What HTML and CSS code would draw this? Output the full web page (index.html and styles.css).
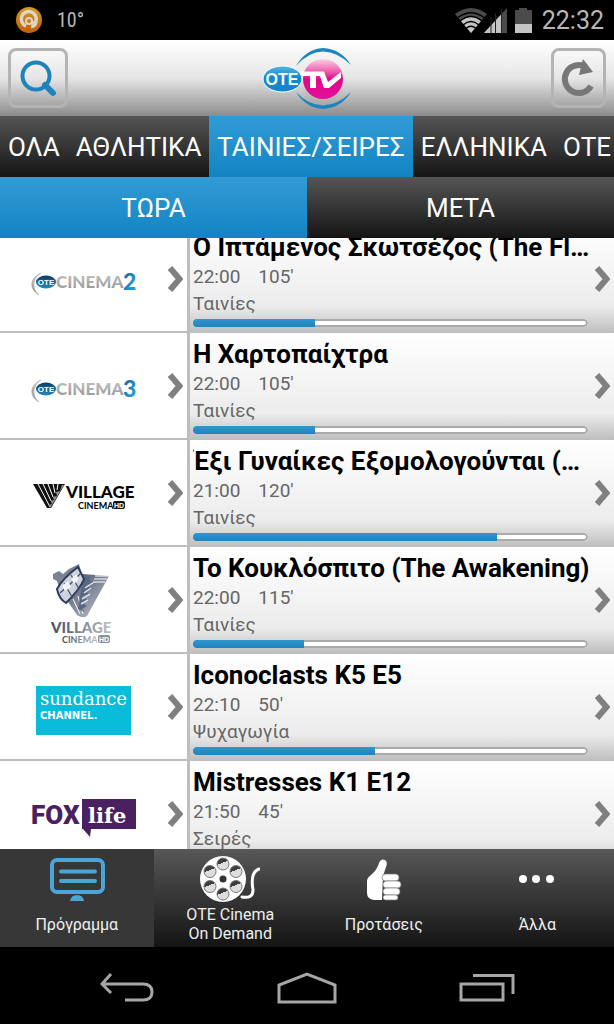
FILE: index.html
```html
<!DOCTYPE html>
<html lang="el">
<head>
<meta charset="utf-8">
<meta name="viewport" content="width=device-width, initial-scale=1">
<title>OTE TV</title>
<link rel="stylesheet" href="styles.css">
</head>
<body>
<div class="screen">
  <div class="status">
    <svg class="status-app" width="26" height="26" viewBox="0 0 26 26" aria-hidden="true">
      <defs><linearGradient id="orange" x2="0" y2="1"><stop offset="0" stop-color="#d59a22"/><stop offset="1" stop-color="#c25f0a"/></linearGradient></defs>
      <circle cx="13" cy="13" r="13" fill="url(#orange)"/>
      <path d="M10 19A7.500 7.500 0 1 1 20 14Q20 18 17 19V14" fill="none" stroke="#ddd6c8" stroke-width="3.500"/>
      <circle cx="13" cy="14" r="3" fill="none" stroke="#ddd6c8" stroke-width="2"/>
    </svg>
    <span class="status-temp">10°</span>
    <svg class="status-signal" width="78" height="26" viewBox="0 0 78 26" aria-hidden="true">
      <path d="M0 7Q16-5 32 7L16 26Z" fill="#4b4b4b"/>
      <path d="M6 14Q16 6 26 14L16 26Z" fill="#c4c4c4"/>
      <path d="M3 10.500Q16 1 29 10.500M5 14Q16 5 27 14M8 18Q16 11 24 18M11 21.500Q16 17 21 21.500" fill="none" stroke="#000" stroke-width="1.300"/>
      <path d="M29 26L52 1V26Z" fill="#4b4b4b"/>
      <path d="M29 26L46 7.500V26Z" fill="#c4c4c4"/>
      <path d="M36 10V26M40.500 6V26M46.500 2V26" stroke="#222" stroke-width="1"/>
      <path d="M60 3H64V1H72V3H77V26H60Z" fill="#4b4b4b"/>
      <path d="M60 17H77V26H60Z" fill="#c4c4c4"/>
    </svg>
    <time class="status-clock">22:32</time>
  </div>

  <header class="header">
    <button class="tool" type="button" aria-label="Αναζήτηση">
      <svg width="40" height="40" viewBox="0 0 40 40" aria-hidden="true" fill="none" stroke="#1f82bd">
        <circle cx="18" cy="18" r="13.500" stroke-width="4"/>
        <path d="M27 27L35 35" stroke-width="6" stroke-linecap="round"/>
      </svg>
    </button>
    <svg class="brand" width="90" height="62" viewBox="0 0 90 62" role="img" aria-label="OTE TV">
      <defs>
        <linearGradient id="pink" x2="0" y2="1"><stop offset="0" stop-color="#fbd0e6"/><stop offset=".35" stop-color="#ec4fa8"/><stop offset=".5" stop-color="#e2078a"/><stop offset="1" stop-color="#e2109a"/></linearGradient>
        <linearGradient id="sky" x2="0" y2="1"><stop offset="0" stop-color="#58b4e0"/><stop offset=".45" stop-color="#1489cc"/><stop offset="1" stop-color="#1085ca"/></linearGradient>
      </defs>
      <path d="M34 19Q44 2 61 1Q79 2 89 18Q76 5 61 4.500Q46 5 34 19ZM34 45Q44 61 61 62Q79 61 89 45Q76 58 61 58.500Q46 58 34 45Z" fill="#1b86be"/>
      <circle cx="61" cy="32" r="20" fill="url(#pink)"/>
      <path d="M38 24.500H62L66 35L79 25V31L67 41H62L58 29H54V41H48V29H38Z" fill="#fff"/>
      <ellipse cx="20.500" cy="32" rx="19.500" ry="13" fill="url(#sky)" stroke="#fff" stroke-width="1"/>
      <text class="brand-ote" x="20" y="38" text-anchor="middle">OTE</text>
    </svg>
    <button class="tool" type="button" aria-label="Ανανέωση">
      <svg width="40" height="40" viewBox="0 0 40 40" aria-hidden="true">
        <path d="M27 9A14 14 0 1 0 32 28" fill="none" stroke="#777" stroke-width="6"/>
        <path d="M24 1L34 14L20 17Z" fill="#777"/>
      </svg>
    </button>
  </header>

  <nav class="genres" aria-label="Κατηγορίες">
    <button type="button" class="genre">ΟΛΑ</button>
    <button type="button" class="genre">ΑΘΛΗΤΙΚΑ</button>
    <button type="button" class="genre active" aria-current="true">ΤΑΙΝΙΕΣ/ΣΕΙΡΕΣ</button>
    <button type="button" class="genre">ΕΛΛΗΝΙΚΑ</button>
    <button type="button" class="genre">ΟΤΕ</button>
  </nav>
  <nav class="times" aria-label="Ώρα">
    <button type="button" class="time active" aria-current="true">ΤΩΡΑ</button>
    <button type="button" class="time">ΜΕΤΑ</button>
  </nav>

  <main class="list-view">
    <svg class="defs" width="0" height="0" aria-hidden="true">
      <symbol id="chevron" viewBox="0 0 16 26"><path d="M3 2L12.500 13L3 24" fill="none" stroke="#808080" stroke-width="6"/></symbol>
      <linearGradient id="navy" x2="0" y2="1"><stop offset="0" stop-color="#0b3c66"/><stop offset="1" stop-color="#2489bd"/></linearGradient>
      <linearGradient id="silver" x2="0" y2="1"><stop offset="0" stop-color="#c9c9c9"/><stop offset="1" stop-color="#929292"/></linearGradient>
      <linearGradient id="digit" x2="1" y2="1"><stop offset="0" stop-color="#15578f"/><stop offset="1" stop-color="#27b4ea"/></linearGradient>
      <linearGradient id="steel" x2="1" y2="1"><stop offset="0" stop-color="#3d4660"/><stop offset="1" stop-color="#c3c8d2"/></linearGradient>
      <linearGradient id="steeltext"><stop offset="0" stop-color="#3e4a5a"/><stop offset="1" stop-color="#c0c5ca"/></linearGradient>
      <symbol id="otecinema" viewBox="0 0 106 26">
        <path d="M10 3C-2 8-2 20 8 25C1 19 1 9 10 3Z" fill="url(#silver)" stroke="#aaa" stroke-width=".5"/>
        <ellipse cx="15" cy="12" rx="10" ry="6.500" fill="url(#navy)"/>
        <text class="mini-ote" x="15" y="15" text-anchor="middle">OTE</text>
        <text class="cinema-word" x="25" y="18" fill="url(#silver)">CINEMA</text>
      </symbol>
    </svg>
    <ul class="rows">
      <li class="row">
        <a class="channel" href="#c2" aria-label="OTE Cinema 2">
          <span class="logo"><svg width="106" height="26" viewBox="0 0 106 26"><use href="#otecinema"/><text class="cinema-num" x="92" y="20" fill="url(#digit)">2</text></svg></span>
          <svg class="chev" width="16" height="26"><use href="#chevron"/></svg>
        </a>
        <a class="show" href="#s1">
          <span class="info"><strong class="title">Ο Ιπτάμενος Σκωτσέζος (The Flying Scotsman)</strong>
          <span class="meta"><span>22:00</span><span>105'</span></span>
          <span class="kind">Ταινίες</span>
          <progress class="bar" value="31" max="100" aria-label="Πρόοδος"></progress></span>
          <svg class="chev" width="16" height="26"><use href="#chevron"/></svg>
        </a>
      </li>
      <li class="row">
        <a class="channel" href="#c3" aria-label="OTE Cinema 3">
          <span class="logo"><svg width="106" height="26" viewBox="0 0 106 26"><use href="#otecinema"/><text class="cinema-num" x="92" y="20" fill="url(#digit)">3</text></svg></span>
          <svg class="chev" width="16" height="26"><use href="#chevron"/></svg>
        </a>
        <a class="show" href="#s2">
          <span class="info"><strong class="title">Η Χαρτοπαίχτρα</strong>
          <span class="meta"><span>22:00</span><span>105'</span></span>
          <span class="kind">Ταινίες</span>
          <progress class="bar" value="31" max="100" aria-label="Πρόοδος"></progress></span>
          <svg class="chev" width="16" height="26"><use href="#chevron"/></svg>
        </a>
      </li>
      <li class="row">
        <a class="channel" href="#c4" aria-label="Village Cinema HD">
          <span class="logo"><svg width="102" height="28" viewBox="0 0 102 28">
            <path d="M0 1H32L18 25H14Z" fill="#111"/>
            <path d="M5 1L17 24M10 1L18 18M15 1L20 14M20 1L22 10M25 1L24 7" stroke="#fff" stroke-width="1"/>
            <path d="M29 2L31 2L17 25L16 22L19 21L18 18L21 17L20 14L24 13L23 9L27 8Z" fill="#999"/>
            <text class="village" x="33" y="15">VILLAGE</text>
            <text class="village-sub" x="45" y="26">CINEMA</text>
            <rect x="80" y="18" width="12" height="8" rx="2" fill="#111"/>
            <text class="hd" x="86" y="25" text-anchor="middle">HD</text>
          </svg></span>
          <svg class="chev" width="16" height="26"><use href="#chevron"/></svg>
        </a>
        <a class="show" href="#s3">
          <span class="info"><strong class="title">Έξι Γυναίκες Εξομολογούνται (Women Confess)</strong>
          <span class="meta"><span>21:00</span><span>120'</span></span>
          <span class="kind">Ταινίες</span>
          <progress class="bar" value="77" max="100" aria-label="Πρόοδος"></progress></span>
          <svg class="chev" width="16" height="26"><use href="#chevron"/></svg>
        </a>
      </li>
      <li class="row">
        <a class="channel" href="#c5" aria-label="Village Cinema HD">
          <span class="logo"><svg width="66" height="80" viewBox="0 0 66 80">
            <path d="M9 26L32 10L58 12L36 52Q32 55 26 51Z" fill="url(#steel)"/>
            <path d="M22 35L29 50M27 32L32 50M44 12L58 12M43 15L56 15M42 18L54 18" stroke="#fff" stroke-width="1"/>
            <path d="M32 14L38 12L39 17L43 18L34 22L41 24L33 27L39 30L31 33L37 36L31 39L36 42L31 45L34 48L27 45Z" fill="#596783"/>
            <path d="M34 24L43 18M33 29L40 24M31 35L39 30M30 40L37 36" stroke="#dde1ea" stroke-width="1.500"/>
            <path d="M2 10L8 7L12 10L18 5L28 0L31 11L19 20L8 23L6 17L2 15Z" fill="#7b8291"/>
            <path d="M6 25Q12 14 27 3L33 15Q29 25 15 39Q8 35 6 25Z" fill="#cdd3df" stroke="#2c3b5b" stroke-width="2"/>
            <path d="M9 29Q20 20 30 9M13 19L21 33M20 11L28 25" fill="none" stroke="#43516e" stroke-width="1.200"/>
            <path d="M11 22L17 17L20 23L14 27ZM20 15L25 10L28 15L23 20Z" fill="#f2f4fa"/>
            <text class="village small" x="0" y="69" fill="url(#steeltext)">VILLAGE</text>
            <text class="village-sub" x="11" y="79" fill="url(#steeltext)">CINEMA</text>
            <rect x="47" y="71" width="12" height="8" rx="2" fill="#8b9094"/>
            <text class="hd" x="53" y="78" text-anchor="middle">HD</text>
          </svg></span>
          <svg class="chev" width="16" height="26"><use href="#chevron"/></svg>
        </a>
        <a class="show" href="#s4">
          <span class="info"><strong class="title">Το Κουκλόσπιτο (The Awakening)</strong>
          <span class="meta"><span>22:00</span><span>115'</span></span>
          <span class="kind">Ταινίες</span>
          <progress class="bar" value="28" max="100" aria-label="Πρόοδος"></progress></span>
          <svg class="chev" width="16" height="26"><use href="#chevron"/></svg>
        </a>
      </li>
      <li class="row">
        <a class="channel" href="#c6">
          <span class="logo"><span class="sundance"><span>sundance</span><small>CHANNEL.</small></span></span>
          <svg class="chev" width="16" height="26"><use href="#chevron"/></svg>
        </a>
        <a class="show" href="#s5">
          <span class="info"><strong class="title">Iconoclasts K5 E5</strong>
          <span class="meta"><span>22:10</span><span>50'</span></span>
          <span class="kind">Ψυχαγωγία</span>
          <progress class="bar" value="46" max="100" aria-label="Πρόοδος"></progress></span>
          <svg class="chev" width="16" height="26"><use href="#chevron"/></svg>
        </a>
      </li>
      <li class="row">
        <a class="channel" href="#c7" aria-label="FOX life">
          <span class="logo"><svg width="106" height="40" viewBox="0 0 106 40">
            <text class="fox" x="0" y="26">FOX</text>
            <path d="M51 1H105V31H60L59 39L52 31H51Z" fill="#4a2060"/>
            <text class="life" x="57" y="25">life</text>
          </svg></span>
          <svg class="chev" width="16" height="26"><use href="#chevron"/></svg>
        </a>
        <a class="show" href="#s6">
          <span class="info"><strong class="title">Mistresses K1 E12</strong>
          <span class="meta"><span>21:50</span><span>45'</span></span>
          <span class="kind">Σειρές</span>
          <progress class="bar" value="80" max="100" aria-label="Πρόοδος"></progress></span>
          <svg class="chev" width="16" height="26"><use href="#chevron"/></svg>
        </a>
      </li>
    </ul>
  </main>

  <nav class="tabbar" aria-label="Κύριο μενού">
    <button type="button" class="tab current" aria-current="page">
      <svg width="56" height="46" viewBox="0 0 56 46" aria-hidden="true" fill="none" stroke="#4aa5d8" stroke-width="4">
        <rect x="3" y="4" width="51" height="32" rx="5"/>
        <path d="M12 15.500H46M12 25H46" stroke-linecap="round"/>
        <path d="M21 45Q22 39 28 39Q34 39 35 45Z" fill="#4aa5d8" stroke="none"/>
      </svg>
      <span class="tab-label">Πρόγραμμα</span>
    </button>
    <button type="button" class="tab">
      <svg width="60" height="46" viewBox="0 0 60 46" aria-hidden="true">
        <defs><linearGradient id="hole" x1="0" y1="0" x2=".4" y2="1"><stop offset=".5" stop-color="#3e3e3e"/><stop offset=".5" stop-color="#ddd"/></linearGradient></defs>
        <circle cx="23" cy="23" r="23" fill="#fff"/>
        <g fill="url(#hole)" stroke="#777" stroke-width="1">
          <circle cx="23" cy="8" r="6"/><circle cx="36" cy="15.500" r="6"/><circle cx="36" cy="30.500" r="6"/>
          <circle cx="23" cy="38" r="6"/><circle cx="10" cy="30.500" r="6"/><circle cx="10" cy="15.500" r="6"/>
        </g>
        <circle cx="23" cy="23" r="3.500" fill="#333"/>
        <path d="M42 41Q53 43 53 34Q50 16 59 13" fill="none" stroke="#fff" stroke-width="3" stroke-linecap="round"/>
      </svg>
      <span class="tab-label">OTE Cinema<br>On Demand</span>
    </button>
    <button type="button" class="tab">
      <svg width="36" height="46" viewBox="0 0 36 46" aria-hidden="true" fill="#fff">
        <path d="M1 25Q1 22 5 19Q11 14 13 7Q15 2 19 4Q22 6 20 11L17 20L16 44H8Q1 43 1 37Z"/>
        <g stroke="#777" stroke-width=".7"><rect x="16" y="18" width="17" height="7" rx="3.500"/><rect x="17" y="25" width="18" height="7" rx="3.500"/><rect x="17" y="32" width="17" height="7" rx="3.500"/><rect x="17" y="39" width="15" height="5" rx="2.500"/></g>
      </svg>
      <span class="tab-label">Προτάσεις</span>
    </button>
    <button type="button" class="tab">
      <svg width="36" height="46" viewBox="0 0 36 46" aria-hidden="true" fill="#fff"><circle cx="4" cy="23" r="4"/><circle cx="17" cy="23" r="4"/><circle cx="31" cy="23" r="4"/></svg>
      <span class="tab-label">Άλλα</span>
    </button>
  </nav>

  <div class="system">
    <button type="button" class="key" aria-label="Πίσω"><svg width="54" height="30" viewBox="0 0 54 30"><path d="M11 1L2 11L11 20M2 11H43Q52 11 52 19Q52 27 43 27H25" fill="none" stroke="#a6a6a6" stroke-width="3"/></svg></button>
    <button type="button" class="key" aria-label="Αρχική"><svg width="60" height="32" viewBox="0 0 60 32"><path d="M2 30V13L30 2L58 13V30Z" fill="none" stroke="#a6a6a6" stroke-width="3"/></svg></button>
    <button type="button" class="key" aria-label="Πρόσφατα"><svg width="56" height="30" viewBox="0 0 56 30"><path d="M2 11H44V27H2ZM14 2.500H54V21" fill="none" stroke="#a6a6a6" stroke-width="3"/></svg></button>
  </div>
</div>
</body>
</html>
```
FILE: styles.css
```css
* { box-sizing: border-box; }

body {
  margin: 0;
  background: #000;
  font-family: Roboto, "Noto Sans", sans-serif;
}

button {
  margin: 0;
  padding: 0;
  border: 0;
  background: none;
  color: inherit;
  font: inherit;
}

a { color: inherit; text-decoration: none; }
svg { display: block; flex: none; }

.screen {
  display: flex;
  flex-direction: column;
  height: 100vh;
}

/* Status bar */
.status {
  flex: none;
  display: flex;
  align-items: center;
  height: 40px;
  padding: 0 10px 0 16px;
  color: #b8b8b8;
}
.status-temp {
  margin-left: 15px;
  font-family: "Liberation Sans Narrow", "Roboto Condensed", Roboto, sans-serif;
  font-size: 20px;
}
.status-signal { margin-left: auto; }
.status-clock { margin-left: 9px; font-size: 25px; }

/* Header */
.header {
  flex: none;
  display: grid;
  grid-template-columns: 1fr auto 1fr;
  align-items: center;
  height: 76px;
  padding: 0 8px;
  background: linear-gradient(#fff, #e6e6e6 50%, #8c8c8c);
}
.tool {
  display: grid;
  place-items: center;
  width: 60px;
  height: 60px;
  border: 3px solid #b4b4b4;
  border-radius: 8px;
}
.tool:last-child { width: 55px; justify-self: end; }
.brand-ote { font: bold 16px "Liberation Sans", sans-serif; fill: #fff; }

/* Category and time tabs */
.genres, .times {
  flex: none;
  display: flex;
  overflow: hidden;
  background: linear-gradient(#555, #151515);
  color: #fff;
  font-size: 26px;
}
.genre { flex: none; height: 61px; padding: 0 8px; white-space: nowrap; }
.time { flex: 1; height: 61px; }
.active { background: linear-gradient(#329bd5, #1284c3); }

/* Programme list, scrolled part way through the first row */
.list-view { flex: 1; min-height: 0; overflow: hidden; background: #fff; }
.defs { position: absolute; }
.rows { margin: -12px 0 0; padding: 0; list-style: none; }
.row { display: grid; grid-template-columns: 190px 1fr; height: 107px; }
.channel {
  display: flex;
  align-items: center;
  padding-right: 4px;
  border-right: 3px solid #bebebe;
  border-bottom: 2px solid #bebebe;
}
.logo { flex: 1; display: flex; justify-content: center; padding-top: 8px; }
.show {
  display: flex;
  align-items: center;
  min-width: 0;
  padding: 0 4px 2px 3px;
  background: linear-gradient(#fff, #ececec 75%, #bebebe);
}
.info {
  flex: 1;
  align-self: stretch;
  display: flex;
  flex-direction: column;
  min-width: 0;
  padding-top: 6px;
}
.title {
  overflow: hidden;
  white-space: nowrap;
  text-overflow: ellipsis;
  color: #000;
  font-size: 26px;
  line-height: 31px;
}
.meta, .kind { color: #666; font-size: 19px; line-height: 27px; }
.meta { display: flex; gap: 18px; }
.bar {
  appearance: none;
  width: calc(100% - 6px);
  height: 8px;
  margin-top: 2px;
  border: 0;
  border-radius: 4px;
  overflow: hidden;
  background: #fff;
}
.bar::-webkit-progress-bar { background: #fff; border-radius: 4px; box-shadow: inset 0 0 0 2px #aaa; }
.bar::-webkit-progress-value { background: linear-gradient(#3096d0, #1c84be); }

/* Channel logos */
.mini-ote { font: bold 8px "Liberation Sans", sans-serif; fill: #fff; }
.cinema-word { font: 900 17px Lato, sans-serif; }
.cinema-num { font: 900 23px Lato, sans-serif; }
.village { font: 900 17px Lato, sans-serif; }
.village.small { font-size: 15px; }
.village-sub { font: bold 9px Lato, sans-serif; }
.hd { font: bold 7px "Liberation Sans", sans-serif; fill: #fff; }
.fox { font: 900 26px Roboto, sans-serif; fill: #4a2060; }
.life { font: bold 21px "DejaVu Serif", serif; fill: #fff; }
.sundance {
  display: flex;
  flex-direction: column;
  width: 95px;
  height: 49px;
  padding-left: 4px;
  background: #08bcda;
  color: #fff;
  font: 18px/26px "DejaVu Serif", serif;
}
.sundance small { font: bold 10px/8px "DejaVu Sans", sans-serif; }

/* App tab bar */
.tabbar {
  flex: none;
  display: grid;
  grid-template-columns: repeat(4, 1fr);
  height: 98px;
  background: linear-gradient(#575757, #141414);
  color: #eee;
  font-size: 16px;
  line-height: 19px;
}
.tab {
  display: flex;
  flex-direction: column;
  align-items: center;
  padding: 7px 0 1px;
}
.current { background: #373737; }
.tab-label { flex: 1; display: flex; align-items: center; }

/* Device keys */
.system {
  flex: none;
  display: grid;
  grid-template-columns: repeat(3, 1fr);
  height: 77px;
  padding: 0 37px;
}
.key { display: grid; place-items: center; padding-top: 5px; }
```
